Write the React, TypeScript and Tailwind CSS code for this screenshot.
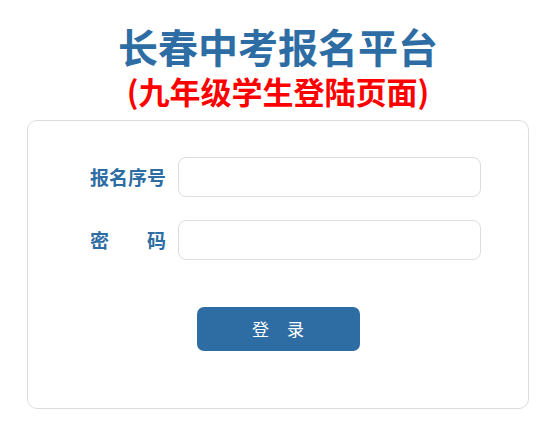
export default function App() {
  return (
    <main className="min-h-[430px] bg-white pt-[24px] font-['Microsoft_YaHei','Noto_Sans_CJK_SC',sans-serif]">
      <header className="flex flex-col items-center">
        <h1 className="text-[40px] font-bold leading-[44px] text-[#2e6da4]">长春中考报名平台</h1>
        <p className="mt-[6px] text-[31px] font-bold leading-[34px] text-[#ff0000]">(九年级学生登陆页面)</p>
      </header>
      <form className="mx-auto mt-[12px] flex h-[289px] w-[502px] flex-col rounded-[10px] border border-[#dddddd] pt-[36px]">
        <div className="flex items-center pl-[62px]">
          <label className="w-[76px] text-[19px] font-bold text-[#2e6da4]">报名序号</label>
          <input className="ml-[12px] h-[40px] w-[303px] rounded-[8px] border border-[#dddddd] px-3 outline-none" />
        </div>
        <div className="mt-[23px] flex items-center pl-[62px]">
          <label className="flex w-[76px] justify-between text-[19px] font-bold text-[#2e6da4]">
            <span>密</span>
            <span>码</span>
          </label>
          <input type="password" className="ml-[12px] h-[40px] w-[303px] rounded-[8px] border border-[#dddddd] px-3 outline-none" />
        </div>
        <div className="mt-[47px] flex justify-center">
          <button type="button" className="h-[44px] w-[163px] rounded-[7px] bg-[#2e6da4] text-[17px] tracking-[18px] text-white">
            <span className="pl-[18px]">登录</span>
          </button>
        </div>
      </form>
    </main>
  );
}
